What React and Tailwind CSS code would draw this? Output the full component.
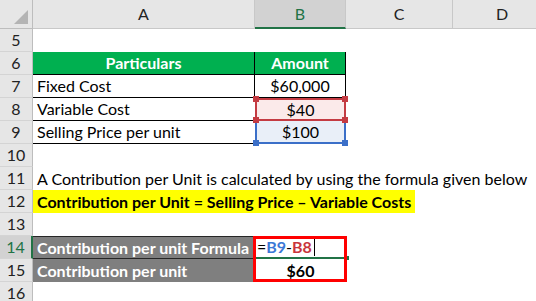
import React from "react";

const font = { fontFamily: "Lato, 'Open Sans', sans-serif" };

function RowHead({ n, active }) {
  return (
    <div
      className={
        "w-[33px] shrink-0 flex items-center justify-center border-b border-[#d4d4d4] text-[16px] " +
        (active
          ? "bg-[#d2d2d2] text-[#217346] border-r-2 border-r-[#217346]"
          : "bg-[#e6e6e6] text-[#222] border-r border-r-[#bdbdbd]")
      }
    >
      {n}
    </div>
  );
}

function Handle({ pos, color }) {
  return <span className={"absolute w-[6px] h-[6px] z-10 " + pos + " " + color} />;
}

export default function App() {
  return (
    <div className="relative w-[536px] h-[301px] overflow-hidden bg-white text-[16px] leading-none text-black" style={font}>
      {/* column headers */}
      <div className="flex h-[29px]">
        <div className="relative w-[33px] shrink-0 bg-[#e6e6e6] border-r border-b border-[#bdbdbd]">
          <div className="absolute right-[4px] bottom-[4px] w-0 h-0 border-l-[14px] border-l-transparent border-b-[14px] border-b-[#b4b4b4]" />
        </div>
        <div className="w-[222px] shrink-0 bg-[#e6e6e6] border-r border-b border-[#c8c8c8] flex items-center justify-center text-[#222]">A</div>
        <div className="w-[91px] shrink-0 bg-[#d2d2d2] border-r border-[#c8c8c8] border-b-2 border-b-[#217346] flex items-center justify-center text-[#217346]">B</div>
        <div className="w-[107px] shrink-0 bg-[#e6e6e6] border-r border-b border-[#c8c8c8] flex items-center justify-center text-[#222]">C</div>
        <div className="flex-1 bg-[#e6e6e6] border-b border-[#c8c8c8] flex items-center pl-[43px] text-[#222]">D</div>
      </div>

      {/* 5 */}
      <div className="flex h-[23px]">
        <RowHead n={5} />
        <div className="flex-1" />
      </div>

      {/* 6 */}
      <div className="flex h-[23px]">
        <RowHead n={6} />
        <div className="w-[222px] shrink-0 bg-[#00b050] border-r border-b border-black flex items-center justify-center text-white font-bold">Particulars</div>
        <div className="w-[91px] shrink-0 bg-[#00b050] border-r border-b border-black flex items-center justify-center text-white font-bold">Amount</div>
      </div>

      {/* 7 */}
      <div className="flex h-[23px]">
        <RowHead n={7} />
        <div className="w-[222px] shrink-0 border-r border-b border-black flex items-center pl-[4px]">Fixed Cost</div>
        <div className="w-[91px] shrink-0 border-r border-b border-black flex items-center justify-center">$60,000</div>
      </div>

      {/* 8 */}
      <div className="flex h-[23px]">
        <RowHead n={8} />
        <div className="w-[222px] shrink-0 border-b border-black flex items-center pl-[4px]">Variable Cost</div>
        <div className="relative w-[91px] shrink-0 bg-[#fbeaea] border-2 border-[#c43b42] flex items-center justify-center">
          $40
          <Handle pos="-left-[4px] -top-[4px]" color="bg-[#c43b42]" />
          <Handle pos="-right-[4px] -top-[4px]" color="bg-[#c43b42]" />
          <Handle pos="-left-[4px] -bottom-[4px]" color="bg-[#c43b42]" />
          <Handle pos="-right-[4px] -bottom-[4px]" color="bg-[#c43b42]" />
        </div>
      </div>

      {/* 9 */}
      <div className="flex h-[23px]">
        <RowHead n={9} />
        <div className="w-[222px] shrink-0 border-b border-black flex items-center pl-[4px]">Selling Price per unit</div>
        <div className="relative w-[91px] shrink-0 bg-[#e9eff8] border-2 border-t-0 border-[#3b6fc8] flex items-center justify-center">
          $100
          <Handle pos="-left-[4px] -bottom-[4px]" color="bg-[#3b6fc8]" />
          <Handle pos="-right-[4px] -bottom-[4px]" color="bg-[#3b6fc8]" />
        </div>
      </div>

      {/* 10 */}
      <div className="flex h-[23px]">
        <RowHead n={10} />
        <div className="flex-1" />
      </div>

      {/* 11 */}
      <div className="flex h-[23px]">
        <RowHead n={11} />
        <div className="flex-1 flex items-center pl-[4px] whitespace-nowrap">
          A Contribution per Unit is calculated by using the formula given below
        </div>
      </div>

      {/* 12 */}
      <div className="flex h-[23px]">
        <RowHead n={12} />
        <div className="w-[382px] shrink-0 bg-[#ffff00] flex items-center pl-[4px] font-bold whitespace-nowrap">
          Contribution per Unit = Selling Price – Variable Costs
        </div>
      </div>

      {/* 13 */}
      <div className="flex h-[23px]">
        <RowHead n={13} />
        <div className="flex-1" />
      </div>

      {/* 14 */}
      <div className="flex h-[23px]">
        <RowHead n={14} active />
        <div className="w-[221px] shrink-0 bg-[#7f7f7f] border-t border-b border-[#262626] flex items-center pl-[4px] text-white font-bold whitespace-nowrap">
          Contribution per unit Formula
        </div>
        <div className="relative w-[91px] shrink-0 ml-[1px] border-b-2 border-[#217346] flex items-center pl-[2px]">
          <span>=</span>
          <span className="text-[#3b78d6] font-bold">B9</span>
          <span>-</span>
          <span className="text-[#c9353c] font-bold">B8</span>
          <span className="ml-[2px] w-px h-[18px] bg-black" />
          <span className="absolute -right-[3px] -bottom-[3px] w-[4px] h-[4px] bg-[#217346]" />
        </div>
      </div>

      {/* 15 */}
      <div className="flex h-[23px]">
        <RowHead n={15} />
        <div className="w-[222px] shrink-0 bg-[#7f7f7f] flex items-center pl-[4px] text-white font-bold">Contribution per unit</div>
        <div className="w-[91px] shrink-0 flex items-center justify-center font-bold">$60</div>
      </div>

      {/* 16 */}
      <div className="flex h-[23px]">
        <RowHead n={16} />
        <div className="flex-1" />
      </div>

      {/* red outline around B14:B15 */}
      <div className="absolute left-[253px] top-[236px] w-[94px] h-[46px] border-[3px] border-[#ff0000] pointer-events-none" />
    </div>
  );
}
